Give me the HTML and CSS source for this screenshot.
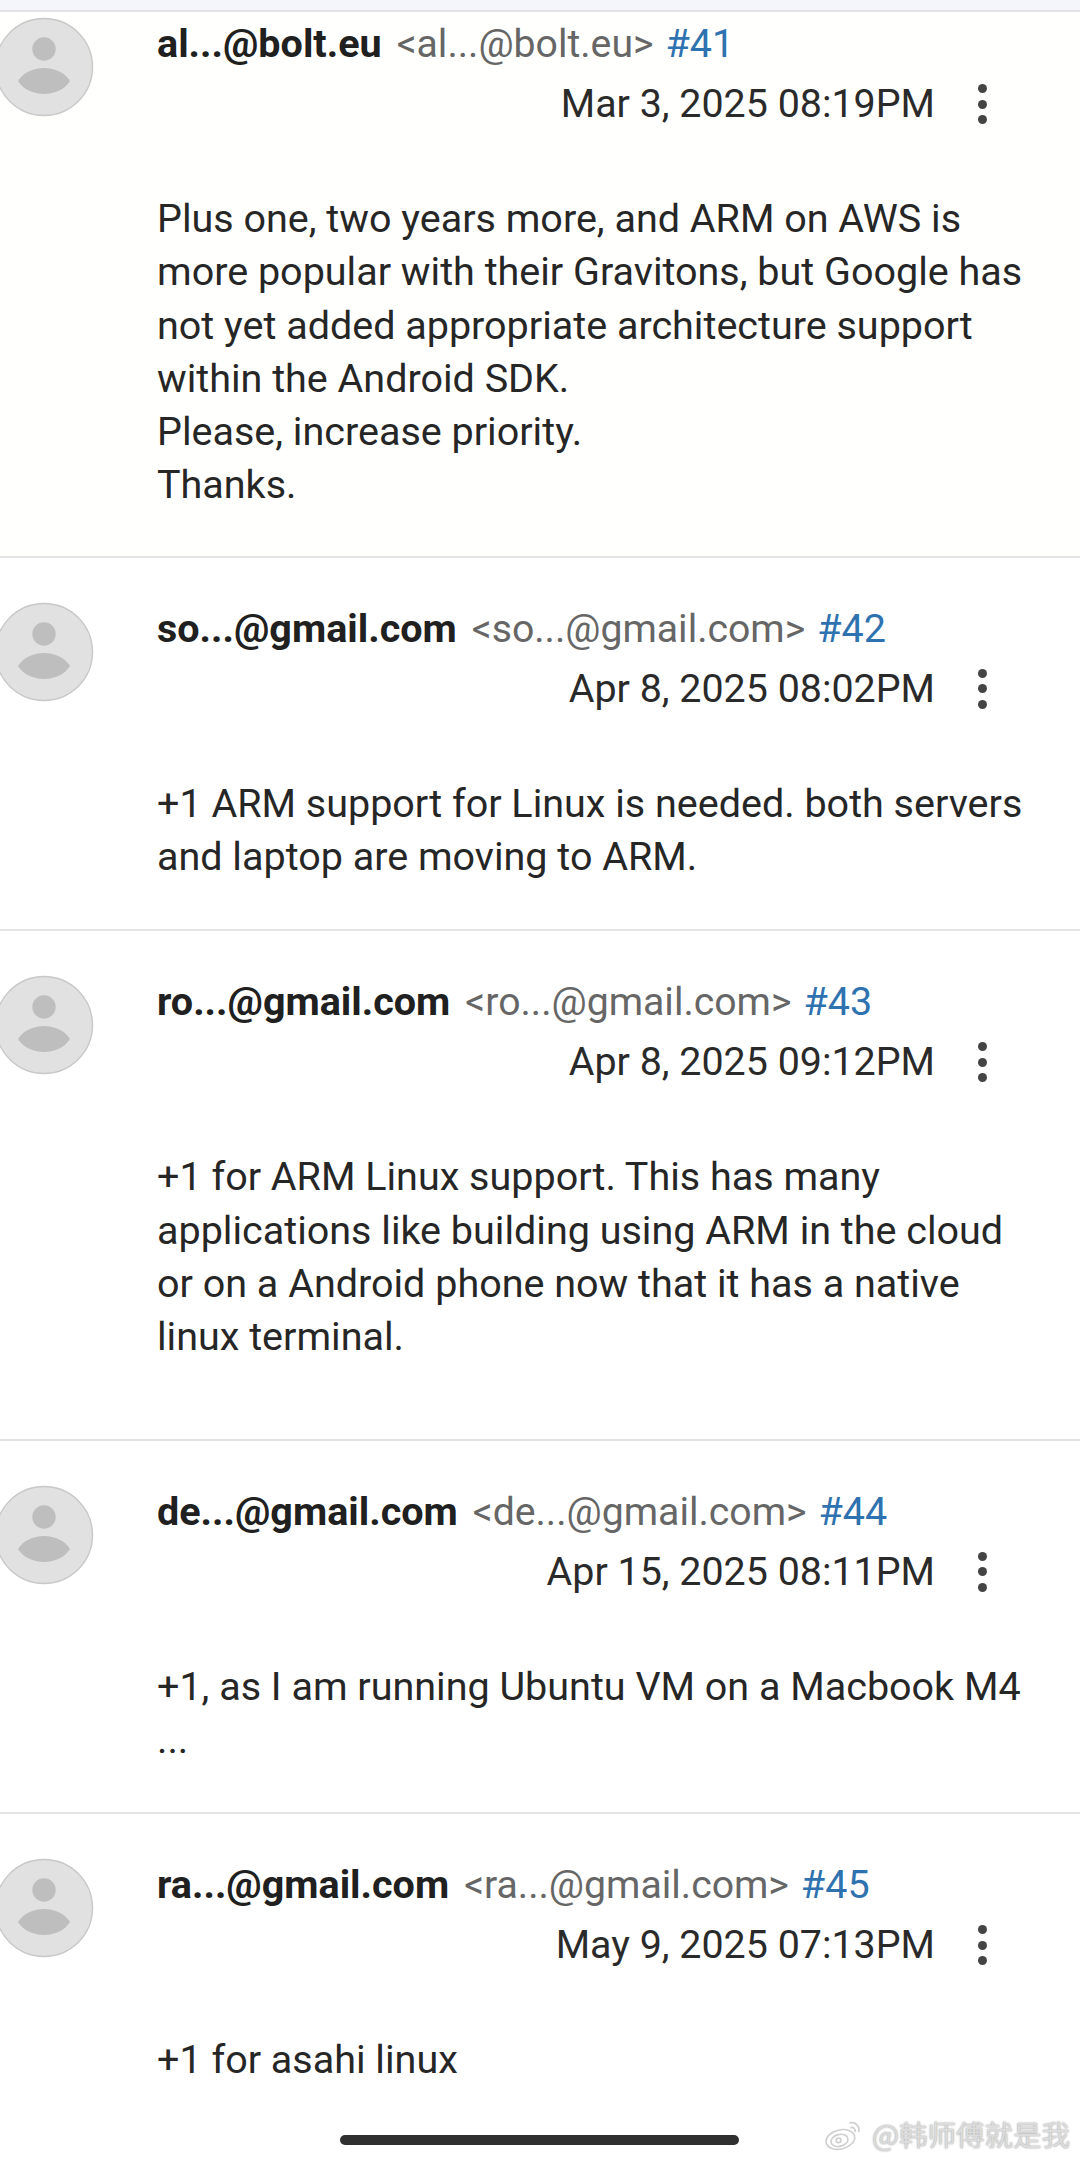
FILE: index.html
```html
<!DOCTYPE html>
<html lang="en">
<head>
<meta charset="utf-8">
<title>Issue comments</title>
<link rel="stylesheet" href="styles.css">
</head>
<body>
<div class="page">
  <div class="topstrip"></div>

  <article class="comment first">
    <svg class="avatar" viewBox="0 0 100 100"><circle cx="50" cy="50" r="48.5" fill="#e1e1e1" stroke="#c8c8c8" stroke-width="1.4"/><circle cx="50" cy="32" r="11.7" fill="#bebebe"/><path d="M24 64C29 56 39 51 50 51C61 51 71 56 76 64C71 72 61 77 50 77C39 77 29 72 24 64Z" fill="#bebebe"/></svg>
    <div class="main">
      <div class="who"><b class="name">al...@bolt.eu</b><span class="mail">&lt;al...@bolt.eu&gt;</span><a class="num">#41</a></div>
      <div class="when"><span>Mar 3, 2025 08:19PM</span><span class="kebab"><i></i><i></i><i></i></span></div>
      <p class="text">Plus one, two years more, and ARM on AWS is more popular with their Gravitons, but Google has not yet added appropriate architecture support within the Android SDK.<br>Please, increase priority.<br>Thanks.</p>
    </div>
  </article>

  <article class="comment">
    <svg class="avatar" viewBox="0 0 100 100"><circle cx="50" cy="50" r="48.5" fill="#e1e1e1" stroke="#c8c8c8" stroke-width="1.4"/><circle cx="50" cy="32" r="11.7" fill="#bebebe"/><path d="M24 64C29 56 39 51 50 51C61 51 71 56 76 64C71 72 61 77 50 77C39 77 29 72 24 64Z" fill="#bebebe"/></svg>
    <div class="main">
      <div class="who"><b class="name">so...@gmail.com</b><span class="mail">&lt;so...@gmail.com&gt;</span><a class="num">#42</a></div>
      <div class="when"><span>Apr 8, 2025 08:02PM</span><span class="kebab"><i></i><i></i><i></i></span></div>
      <p class="text">+1 ARM support for Linux is needed. both servers and laptop are moving to ARM.</p>
    </div>
  </article>

  <article class="comment tall">
    <svg class="avatar" viewBox="0 0 100 100"><circle cx="50" cy="50" r="48.5" fill="#e1e1e1" stroke="#c8c8c8" stroke-width="1.4"/><circle cx="50" cy="32" r="11.7" fill="#bebebe"/><path d="M24 64C29 56 39 51 50 51C61 51 71 56 76 64C71 72 61 77 50 77C39 77 29 72 24 64Z" fill="#bebebe"/></svg>
    <div class="main">
      <div class="who"><b class="name">ro...@gmail.com</b><span class="mail">&lt;ro...@gmail.com&gt;</span><a class="num">#43</a></div>
      <div class="when"><span>Apr 8, 2025 09:12PM</span><span class="kebab"><i></i><i></i><i></i></span></div>
      <p class="text">+1 for ARM Linux support. This has many applications like building using ARM in the cloud or on a Android phone now that it has a native linux terminal.</p>
    </div>
  </article>

  <article class="comment">
    <svg class="avatar" viewBox="0 0 100 100"><circle cx="50" cy="50" r="48.5" fill="#e1e1e1" stroke="#c8c8c8" stroke-width="1.4"/><circle cx="50" cy="32" r="11.7" fill="#bebebe"/><path d="M24 64C29 56 39 51 50 51C61 51 71 56 76 64C71 72 61 77 50 77C39 77 29 72 24 64Z" fill="#bebebe"/></svg>
    <div class="main">
      <div class="who"><b class="name">de...@gmail.com</b><span class="mail">&lt;de...@gmail.com&gt;</span><a class="num">#44</a></div>
      <div class="when"><span>Apr 15, 2025 08:11PM</span><span class="kebab"><i></i><i></i><i></i></span></div>
      <p class="text">+1, as I am running Ubuntu VM on a Macbook M4<br>...</p>
    </div>
  </article>

  <article class="comment last">
    <svg class="avatar" viewBox="0 0 100 100"><circle cx="50" cy="50" r="48.5" fill="#e1e1e1" stroke="#c8c8c8" stroke-width="1.4"/><circle cx="50" cy="32" r="11.7" fill="#bebebe"/><path d="M24 64C29 56 39 51 50 51C61 51 71 56 76 64C71 72 61 77 50 77C39 77 29 72 24 64Z" fill="#bebebe"/></svg>
    <div class="main">
      <div class="who"><b class="name">ra...@gmail.com</b><span class="mail">&lt;ra...@gmail.com&gt;</span><a class="num">#45</a></div>
      <div class="when"><span>May 9, 2025 07:13PM</span><span class="kebab"><i></i><i></i><i></i></span></div>
      <p class="text">+1 for asahi linux</p>
    </div>
  </article>

  <div class="homebar"></div>
  <div class="mark">
    <svg class="weibo" viewBox="0 0 44 36" fill="none" stroke="#cfcfcf" stroke-width="1.8"><ellipse cx="18" cy="24" rx="16" ry="10.5" transform="rotate(-14 18 24)"/><ellipse cx="17" cy="25" rx="9.5" ry="6.5" transform="rotate(-14 17 25)"/><circle cx="16" cy="25" r="2.6"/><path d="M28 6c6-2 12 3 10 10"/><path d="M29 11c3-1 6 1 5 5"/></svg>
    <span>@韩师傅就是我</span>
  </div>
</div>
</body>
</html>
```

FILE: styles.css
```css
* { box-sizing: border-box; }
html, body { margin: 0; padding: 0; background: #fff; }
.page {
  position: relative;
  width: 1080px;
  height: 2162px;
  overflow: hidden;
  font-family: Roboto, "Liberation Sans", sans-serif;
  color: #212121;
}
.topstrip {
  height: 12px;
  background: #f5f6fb;
  border-bottom: 2px solid #e2e2e4;
}
.comment {
  display: flex;
  align-items: flex-start;
  padding: 44px 53px 46px 0;
  border-bottom: 2px solid #e3e3e3;
}
.comment.first {
  padding-top: 5px;
  padding-bottom: 44px;
  background: #fffffd;
}
.comment.tall { padding-bottom: 75px; }
.comment.last { border-bottom: 0; }
.avatar {
  flex: none;
  width: 100px;
  height: 100px;
  margin-left: -6px;
  margin-right: 63px;
}
.main { flex: 1; min-width: 0; padding-top: 3px; }
.who {
  display: flex;
  align-items: baseline;
  height: 58px;
  font-size: 39.5px;
  line-height: 48px;
  white-space: nowrap;
}
.name { font-weight: 700; color: #202020; margin-right: 15px; }
.mail { font-size: 39.2px; color: #666; margin-right: 12px; }
.num { color: #2f72b0; }
.when {
  display: flex;
  justify-content: flex-end;
  align-items: center;
  height: 52px;
  margin-right: 3px;
  font-size: 39.4px;
  line-height: 52px;
  color: #2a2a2a;
}
.kebab {
  display: flex;
  flex-direction: column;
  align-items: center;
  gap: 6.5px;
  width: 9px;
  margin-left: 43px;
  margin-right: 37px;
}
.kebab i {
  display: block;
  width: 9px;
  height: 9px;
  border-radius: 50%;
  background: #444;
}
.text {
  margin: 62px 0 0;
  font-size: 39.5px;
  line-height: 53.3px;
  color: #262626;
}
.homebar {
  position: absolute;
  left: 340px;
  top: 2135px;
  width: 399px;
  height: 10px;
  border-radius: 5px;
  background: #303030;
}
.mark {
  position: absolute;
  right: 10px;
  top: 2114px;
  display: flex;
  align-items: center;
  gap: 8px;
  font-family: "Noto Sans CJK SC", "Noto Sans", sans-serif;
  font-size: 28.5px;
  line-height: 40px;
  color: #dcdcdc;
  text-shadow: 0 0 2px #8f8f8f;
}
.weibo { width: 40px; height: 36px; }
```
